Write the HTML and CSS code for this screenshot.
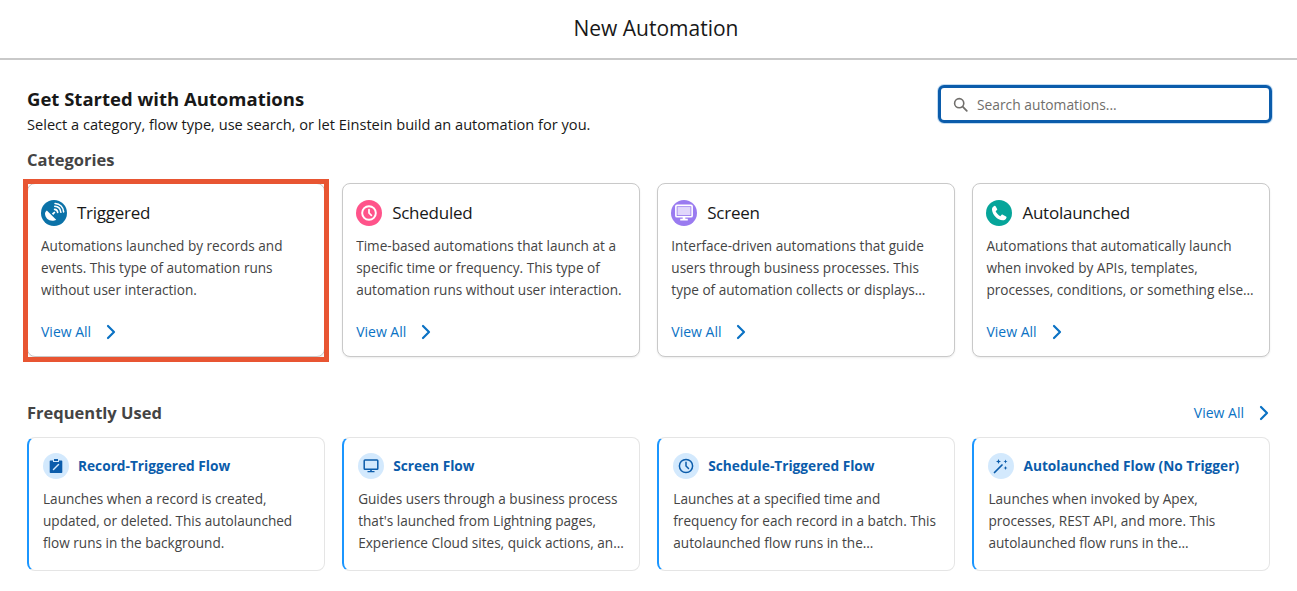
FILE: index.html
```html
<!DOCTYPE html>
<html lang="en">
<head>
<meta charset="utf-8">
<title>New Automation</title>
<link rel="stylesheet" href="styles.css">
</head>
<body>
<header class="top"><h1>New Automation</h1></header>
<main class="main">
  <div class="intro">
    <div>
      <h2 class="title">Get Started with Automations</h2>
      <p class="sub">Select a category, flow type, use search, or let Einstein build an automation for you.</p>
    </div>
    <label class="search">
      <svg class="search-ico" viewBox="0 0 16 16"><circle cx="6.600" cy="6.600" r="4.900" fill="none" stroke="#706e6b" stroke-width="1.700"/><path d="M10.300 10.300l4.400 4.400" stroke="#706e6b" stroke-width="1.900" stroke-linecap="round"/></svg>
      <input class="search-input" type="text" placeholder="Search automations...">
    </label>
  </div>

  <h3 class="section">Categories</h3>
  <div class="cards">
    <article class="cat highlighted">
      <div class="cat-head">
        <span class="cat-ico c-blue"><svg viewBox="0 0 24 24"><path fill="#fff" d="M5.400 9.600l8.600 8.600c-1 .7-2.300 1-3.500 1-3.900 0-6.800-3-6.800-6.700 0-1 .6-2 1.700-2.900z"/><path fill="#fff" d="M10 12.500l2.300-1.900 1 1-2 2.300z"/><path d="M12.500 8.700c1.600.1 2.700 1.200 2.900 2.800M12.700 5.800c3.100.2 5.300 2.400 5.600 5.500M13 3.200c4.500.3 7.600 3.400 7.900 7.800" fill="none" stroke="#fff" stroke-width="1.500" stroke-linecap="round"/></svg></span>
        <span class="cat-name">Triggered</span>
      </div>
      <p class="cat-text">Automations launched by records and events. This type of automation runs without user interaction.</p>
      <a class="view"><span>View All</span><svg class="chev" viewBox="0 0 12 16"><path d="M3 2l6 6-6 6" fill="none" stroke="#0b72c4" stroke-width="2.200" stroke-linecap="round" stroke-linejoin="round"/></svg></a>
    </article>
    <article class="cat">
      <div class="cat-head">
        <span class="cat-ico c-pink"><svg viewBox="0 0 24 24"><circle cx="12" cy="12" r="6.300" fill="none" stroke="#fff" stroke-width="1.800"/><path d="M12 8.800V12l2.200 2.200" fill="none" stroke="#fff" stroke-width="1.600" stroke-linecap="round"/></svg></span>
        <span class="cat-name">Scheduled</span>
      </div>
      <p class="cat-text">Time-based automations that launch at a specific time or frequency. This type of automation runs without user interaction.</p>
      <a class="view"><span>View All</span><svg class="chev" viewBox="0 0 12 16"><path d="M3 2l6 6-6 6" fill="none" stroke="#0b72c4" stroke-width="2.200" stroke-linecap="round" stroke-linejoin="round"/></svg></a>
    </article>
    <article class="cat">
      <div class="cat-head">
        <span class="cat-ico c-purple"><svg viewBox="0 0 24 24"><rect x="4.500" y="5" width="15" height="10.500" rx="1" fill="none" stroke="#fff" stroke-width="1.500"/><rect x="6" y="6.500" width="12" height="7.500" fill="#fff" opacity=".7"/><path fill="#fff" d="M10.800 15.500h2.400v1.800h-2.400zM8.500 17.300h7V19h-7z"/></svg></span>
        <span class="cat-name">Screen</span>
      </div>
      <p class="cat-text cut">Interface-driven automations that guide users through business processes. This type of automation collects or displays information and can be launched.</p>
      <a class="view"><span>View All</span><svg class="chev" viewBox="0 0 12 16"><path d="M3 2l6 6-6 6" fill="none" stroke="#0b72c4" stroke-width="2.200" stroke-linecap="round" stroke-linejoin="round"/></svg></a>
    </article>
    <article class="cat">
      <div class="cat-head">
        <span class="cat-ico c-teal"><svg viewBox="0 0 24 24"><path fill="#fff" d="M8.600 5.200l1.700 3c.2.400.1.800-.2 1.100l-1.200 1.100c.9 2 2.300 3.500 4.300 4.500l1.200-1.200c.3-.3.800-.4 1.100-.2l3 1.700c.4.200.6.700.4 1.100-.6 1.600-1.900 2.500-3.400 2.500-5.200-.5-9.500-4.800-10-10 0-1.500.9-2.900 2.500-3.500.3-.2.400-.1.600.4z"/></svg></span>
        <span class="cat-name">Autolaunched</span>
      </div>
      <p class="cat-text cut">Automations that automatically launch when invoked by APIs, templates, processes, conditions, or something else that happens in your org today.</p>
      <a class="view"><span>View All</span><svg class="chev" viewBox="0 0 12 16"><path d="M3 2l6 6-6 6" fill="none" stroke="#0b72c4" stroke-width="2.200" stroke-linecap="round" stroke-linejoin="round"/></svg></a>
    </article>
  </div>

  <div class="section-row">
    <h3 class="section">Frequently Used</h3>
    <a class="view"><span>View All</span><svg class="chev" viewBox="0 0 12 16"><path d="M3 2l6 6-6 6" fill="none" stroke="#0b72c4" stroke-width="2.200" stroke-linecap="round" stroke-linejoin="round"/></svg></a>
  </div>
  <div class="cards">
    <article class="flow">
      <div class="flow-head">
        <span class="flow-ico"><svg viewBox="0 0 16 16"><path fill="#0b5cab" d="M2.500 2.500H5V4h6V2.500h2.500a.8.800 0 0 1 .8.800v11a.8.800 0 0 1-.8.800h-11a.8.800 0 0 1-.8-.800v-11a.8.800 0 0 1 .8-.800zM6 1h4v2H6z"/><path d="M5.500 11.500L10.500 6.500" stroke="#d3e9fd" stroke-width="1.500" stroke-linecap="round"/></svg></span>
        <span class="flow-name">Record-Triggered Flow</span>
      </div>
      <p class="flow-text">Launches when a record is created, updated, or deleted. This autolaunched flow runs in the background.</p>
    </article>
    <article class="flow">
      <div class="flow-head">
        <span class="flow-ico"><svg viewBox="0 0 16 16"><rect x="1.200" y="2" width="13.600" height="9.300" rx=".8" fill="none" stroke="#0b5cab" stroke-width="1.500"/><path fill="#0b5cab" d="M7.200 11h1.600v2H7.200zM4.500 13h7v1.300h-7z"/></svg></span>
        <span class="flow-name">Screen Flow</span>
      </div>
      <p class="flow-text cut">Guides users through a business process that's launched from Lightning pages, Experience Cloud sites, quick actions, and more places too.</p>
    </article>
    <article class="flow">
      <div class="flow-head">
        <span class="flow-ico"><svg viewBox="0 0 16 16"><circle cx="8" cy="8" r="6.600" fill="none" stroke="#0b5cab" stroke-width="1.500"/><path d="M8 4.200V8l2.500 2.500" fill="none" stroke="#0b5cab" stroke-width="1.500" stroke-linecap="round"/></svg></span>
        <span class="flow-name">Schedule-Triggered Flow</span>
      </div>
      <p class="flow-text cut">Launches at a specified time and frequency for each record in a batch. This autolaunched flow runs in the background without any user.</p>
    </article>
    <article class="flow">
      <div class="flow-head">
        <span class="flow-ico"><svg viewBox="0 0 16 16"><path d="M1.500 14.500L9 7" stroke="#0b5cab" stroke-width="1.700" stroke-linecap="round"/><path fill="#0b5cab" d="M5.500 1l.7 1.800L8 3.500l-1.800.7L5.500 6l-.7-1.800L3 3.500l1.800-.7zM12.500 1.500l.6 1.400 1.400.6-1.400.6-.6 1.400-.6-1.400-1.400-.6 1.400-.6zM12.500 8l.6 1.400 1.400.6-1.400.6-.6 1.400-.6-1.400-1.400-.6 1.400-.6z"/></svg></span>
        <span class="flow-name">Autolaunched Flow (No Trigger)</span>
      </div>
      <p class="flow-text cut">Launches when invoked by Apex, processes, REST API, and more. This autolaunched flow runs in the background without any user.</p>
    </article>
  </div>
</main>
</body>
</html>
```

FILE: styles.css
```css
* { box-sizing: border-box; }
html, body { margin: 0; padding: 0; }
body {
  background: #fff;
  color: #181818;
  font-family: "Open Sans", "Noto Sans", "Liberation Sans", sans-serif;
  overflow: hidden;
}
h1, h2, h3, p { margin: 0; }

.top {
  height: 60px;
  border-bottom: 2px solid #c9c9c9;
  display: flex;
  align-items: center;
  justify-content: center;
  padding: 0 0 3px 15px;
}
.top h1 { font-size: 21px; font-weight: 400; line-height: 56px; }

.main { padding: 25px 27px 0; }

.intro { display: flex; justify-content: space-between; align-items: flex-start; }
.title { font-size: 18.500px; font-weight: 700; line-height: 28px; color: #181818; }
.sub { font-size: 14.600px; line-height: 20px; margin-top: 1px; }

.search {
  width: 334px;
  height: 38px;
  margin: 0 -2px 0 0;
  border: 3px solid #0b5cab;
  border-radius: 6px;
  display: flex;
  align-items: center;
  gap: 7px;
  padding-left: 12px;
  background: #fff;
  box-shadow: 0 0 0 1px #c3dcf2;
}
.search-ico { width: 15px; height: 15px; flex: none; }
.search-input {
  flex: 1;
  min-width: 0;
  border: 0;
  outline: 0;
  background: transparent;
  font: 13.800px "Open Sans", sans-serif;
  color: #706e6b;
}
.search-input::placeholder { color: #706e6b; opacity: 1; }

.section { font-size: 16.500px; font-weight: 700; line-height: 24px; color: #444; }
.intro + .section { margin-top: 14px; }

.cards { display: grid; grid-template-columns: repeat(4, 1fr); gap: 17.600px; }
.intro + .section + .cards { margin-top: 11px; }

.cat {
  position: relative;
  height: 174px;
  border: 1px solid #c9c9c9;
  border-radius: 8px;
  padding: 13px 13px 0;
  background: #fff;
  box-shadow: 0 1px 2px rgba(0,0,0,.08);
  display: flex;
  flex-direction: column;
}
.highlighted::after {
  content: "";
  position: absolute;
  left: -5px;
  top: -5px;
  right: -5px;
  bottom: -6px;
  border: 5px solid #e85532;
  pointer-events: none;
}
.cat-head { display: flex; align-items: center; gap: 10px; height: 32px; }
.cat-ico { width: 26px; height: 26px; border-radius: 50%; flex: none; display: flex; }
.cat-ico svg { width: 100%; height: 100%; }
.c-blue { background: #0b72a8; }
.c-pink { background: #ff538a; }
.c-purple { background: #9a7bf0; }
.c-teal { background: #06a59a; }
.cat-name { font-size: 17px; line-height: 24px; letter-spacing: -.25px; color: #181818; }
.cat-text, .flow-text {
  font-size: 13.600px;
  line-height: 22px;
  color: #444;
}
.cat-text { margin-top: 6px; height: 66px; overflow: hidden; }
.cut {
  display: -webkit-box;
  -webkit-box-orient: vertical;
  -webkit-line-clamp: 3;
  overflow: hidden;
}
.view {
  display: flex;
  align-items: center;
  gap: 14px;
  color: #0b72c4;
  font-size: 14px;
  line-height: 20px;
}
.cat .view { margin-top: 21px; }
.chev { width: 12px; height: 16px; flex: none; }

.section-row { display: flex; justify-content: space-between; align-items: center; margin-top: 44px; height: 24px; margin-bottom: 12px; }

.flow {
  height: 134px;
  border: 1px solid #e5e5e5;
  border-left: 2px solid #1b96ff;
  border-radius: 8px;
  padding: 15px 14px 0 14px;
  background: #fff;
}
.flow-head { display: flex; align-items: center; gap: 9px; height: 26px; }
.flow-ico {
  width: 26px;
  height: 26px;
  border-radius: 50%;
  background: #d3e9fd;
  flex: none;
  display: flex;
  align-items: center;
  justify-content: center;
}
.flow-ico svg { width: 16px; height: 16px; }
.flow-name { font-size: 13.700px; font-weight: 700; color: #0b5cab; line-height: 20px; }
.flow-text { margin-top: 9px; height: 66px; }
```
